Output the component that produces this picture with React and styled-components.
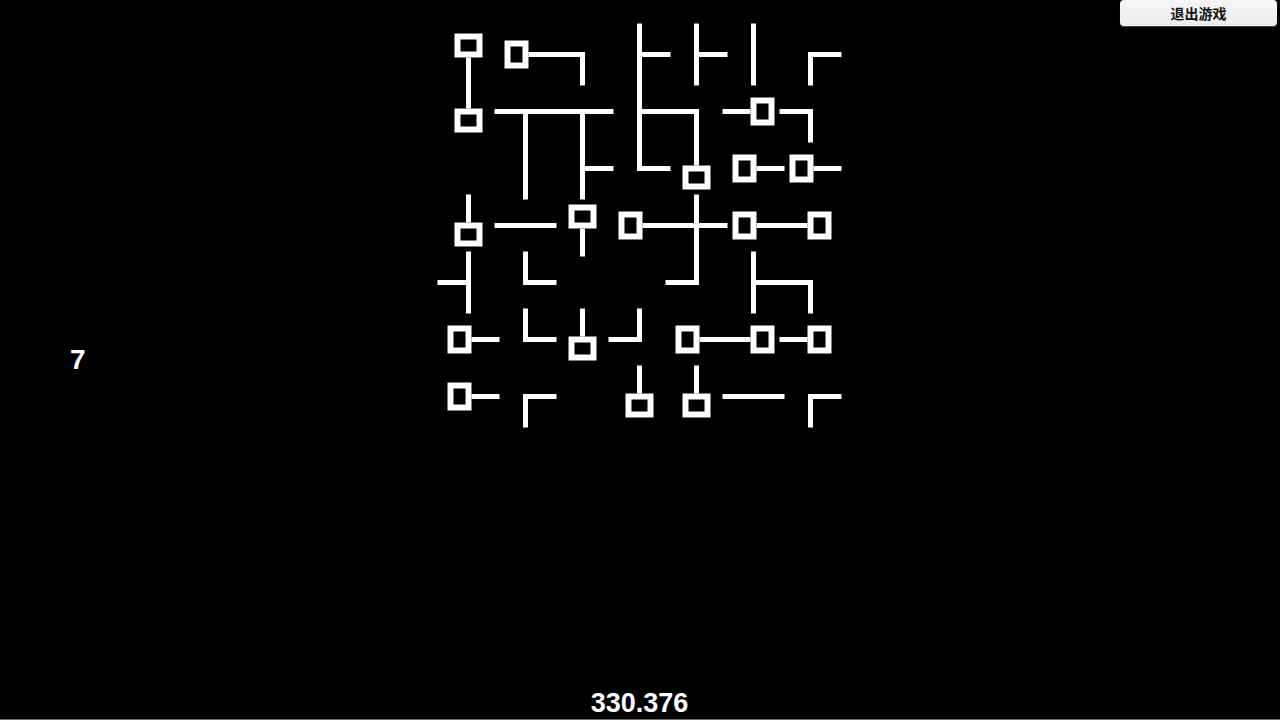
import React from 'react'
import styled, { createGlobalStyle } from 'styled-components'

const GlobalStyle = createGlobalStyle`
    html, body {
        margin: 0;
        padding: 0;
        background: #000;
    }
    body {
        font-family: "Liberation Sans", Arial, sans-serif;
    }
`

const Page = styled.div`
    box-sizing: border-box;
    width: 100vw;
    height: 100vh;
    background: #000;
    border-bottom: 1px solid #6a6a6a;
    display: grid;
    grid-template-columns: 440px 399px 1fr;
    overflow: hidden;
`

const LeftSide = styled.div`
    display: flex;
    align-items: center;
    padding-left: 70px;
`

const Level = styled.div`
    color: #fff;
    font-size: 28px;
    font-weight: bold;
`

const Center = styled.div`
    display: flex;
    flex-direction: column;
    justify-content: space-between;
    align-items: center;
    padding-top: 25.5px;
    padding-bottom: 1px;
`

const Board = styled.div`
    display: grid;
    grid-template-columns: repeat(7, 57px);
    grid-template-rows: repeat(7, 57px);
`

const Cell = styled.div`
    width: 57px;
    height: 57px;

    svg {
        display: block;
        overflow: visible;
    }
`

const Score = styled.div`
    color: #fff;
    font-size: 27px;
    font-weight: bold;
    line-height: 30px;
`

const RightSide = styled.div`
    display: flex;
    justify-content: flex-end;
    align-items: flex-start;
    padding-right: 3px;
`

const ExitButton = styled.button`
    width: 157px;
    height: 26px;
    border: none;
    border-radius: 4px;
    background: linear-gradient(#f6f6f6, #ececec);
    box-shadow: 0 1px 1px rgba(255, 255, 255, 0.3);
    color: #111;
    font-family: "Noto Sans CJK SC", "Liberation Sans", sans-serif;
    font-size: 14px;
    font-weight: bold;
    padding: 0;
    cursor: pointer;
`

const ROWS = [
    ['bD', 'bR', 'LD', 'UDR', 'UDR', 'UD', 'RD'],
    ['bU', 'LRD', 'LRD', 'UDR', 'LD', 'bL', 'LD'],
    ['', 'UD', 'UDR', 'UR', 'bU', 'bR', 'bR'],
    ['bU', 'LR', 'bD', 'bR', 'UDLR', 'bR', 'bL'],
    ['UDL', 'UR', '', '', 'UL', 'UDR', 'LD'],
    ['bR', 'UR', 'bU', 'UL', 'bR', 'bL', 'bL'],
    ['bR', 'RD', '', 'bU', 'bU', 'LR', 'RD'],
]

const ARMS = {
    U: { x: -2.5, y: -31, w: 5, h: 33.5 },
    D: { x: -2.5, y: -2.5, w: 5, h: 33.5 },
    L: { x: -31, y: -2.5, w: 33.5, h: 5 },
    R: { x: -2.5, y: -2.5, w: 33.5, h: 5 },
}

const TURN = { D: 0, L: 90, U: 180, R: 270 }

const Pipe = ({ code }) => {
    if (!code) return null
    if (code[0] === 'b') {
        return (
            <g transform={`rotate(${TURN[code[1]]})`}>
                <rect x={-11} y={-18} width={22} height={18} fill="none" stroke="#fff" strokeWidth={6} />
                <rect x={-2.5} y={3} width={5} height={28} fill="#fff" />
            </g>
        )
    }
    return (
        <g>
            {code.split('').map(d => (
                <rect key={d} x={ARMS[d].x} y={ARMS[d].y} width={ARMS[d].w} height={ARMS[d].h} fill="#fff" />
            ))}
        </g>
    )
}

const Tile = ({ code }) => (
    <Cell>
        <svg width="57" height="57" viewBox="-28.5 -28.5 57 57">
            <Pipe code={code} />
        </svg>
    </Cell>
)

export default function App() {
    return (
        <>
            <GlobalStyle />
            <Page>
                <LeftSide>
                    <Level>7</Level>
                </LeftSide>
                <Center>
                    <Board>
                        {ROWS.map((row, r) =>
                            row.map((code, c) => <Tile key={`${r}-${c}`} code={code} />)
                        )}
                    </Board>
                    <Score>330.376</Score>
                </Center>
                <RightSide>
                    <ExitButton>退出游戏</ExitButton>
                </RightSide>
            </Page>
        </>
    )
}
